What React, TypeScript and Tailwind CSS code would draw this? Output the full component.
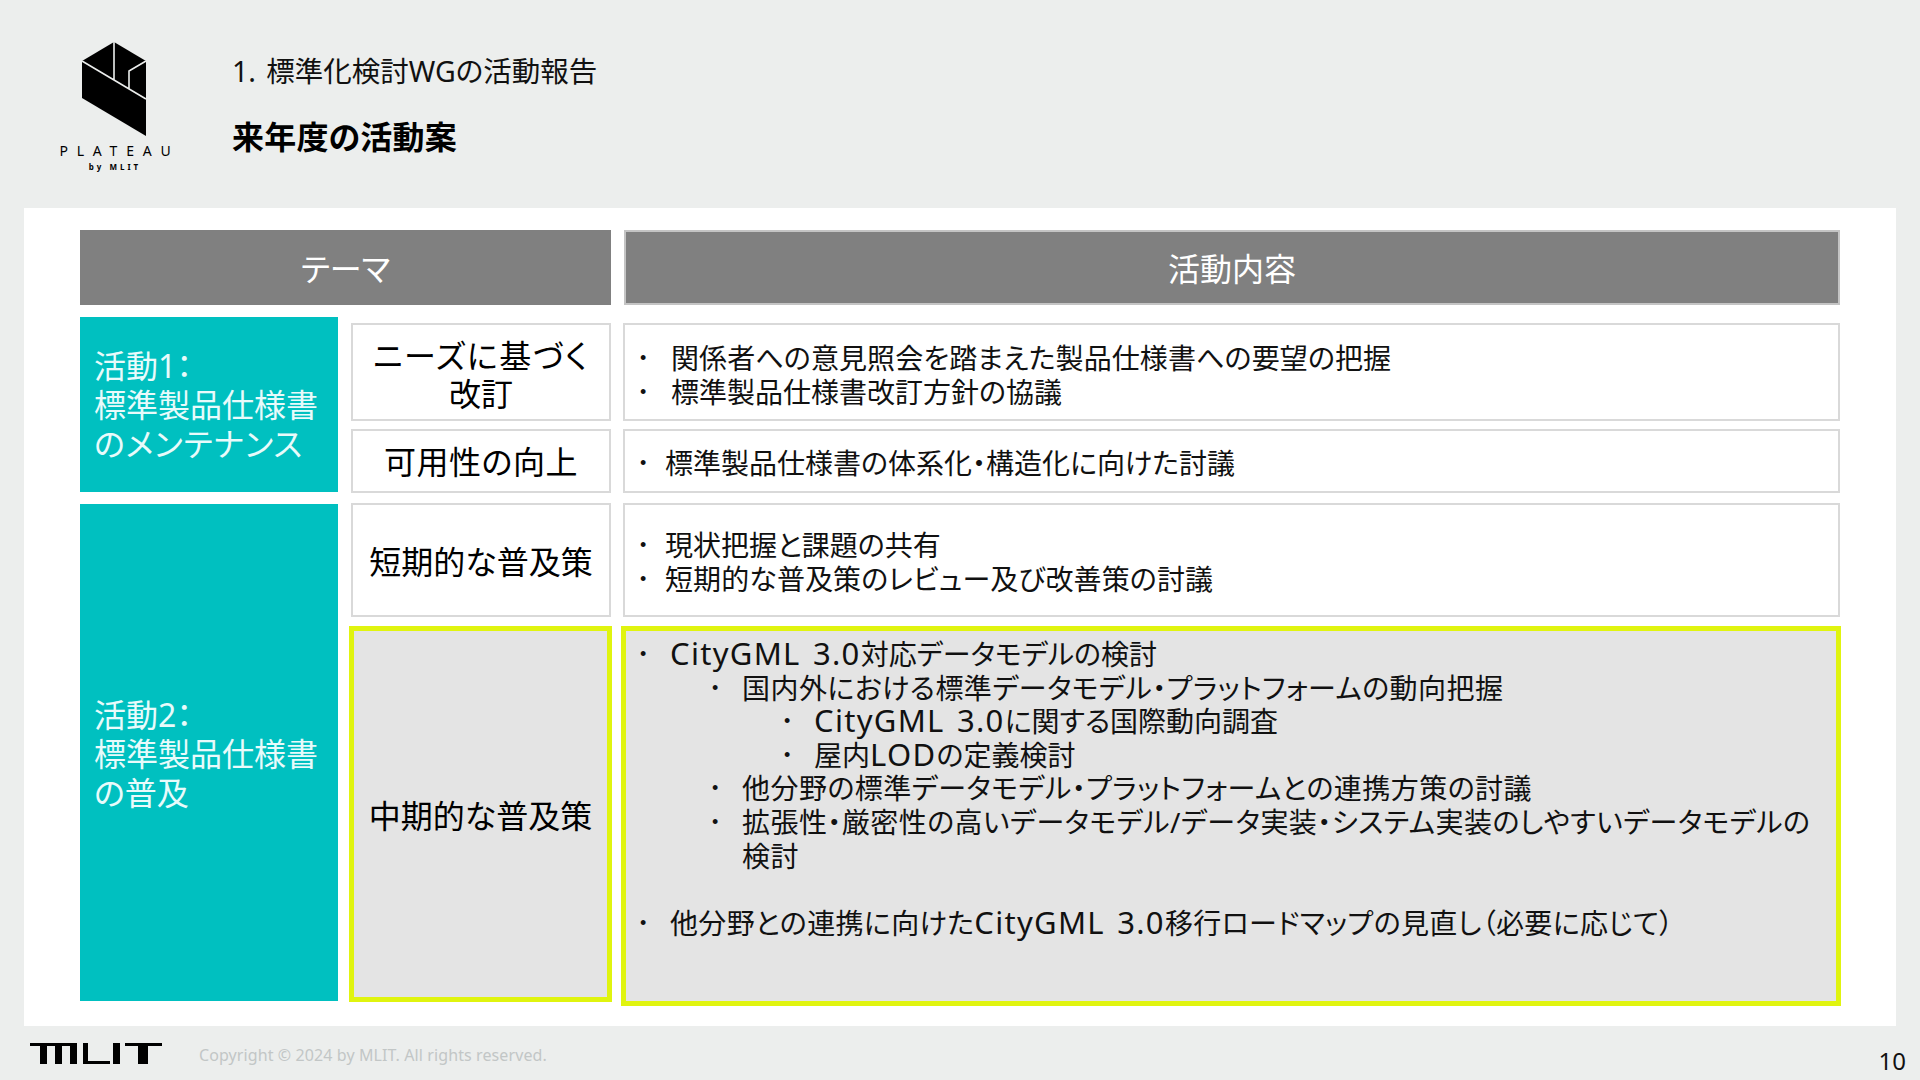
import type { ReactNode } from "react";

const font = "font-['Noto_Sans','Noto_Sans_CJK_JP',sans-serif]";

const Bullet = ({ level = 0, col = "w-[30px]", className = "", children }: { level?: number; col?: string; className?: string; children: ReactNode }) => {
    const indent = level === 0 ? "" : level === 1 ? "ml-[72px]" : "ml-[144px]";
    return (
        <div className={`flex ${indent}`}>
            <span className={`${col} shrink-0 font-['Liberation_Sans',sans-serif] text-[18px]`}>•</span>
            <span className={`whitespace-nowrap ${className}`}>{children}</span>
        </div>
    );
};

const Latin = ({ children }: { children: ReactNode }) => (
    <span className="text-[31px] leading-none tracking-[1.3px] [word-spacing:3px]">{children}</span>
);

const PlateauLogo = () => (
    <div className="flex w-[110px] flex-col items-center">
        <svg width="66" height="96" viewBox="0 0 66 96" className="ml-[-2px]">
            <path d="M33 0 L65 19 L65 94 L1 56 L1 19 Z" fill="#000" />
            <path d="M1 19 L65 57 M33 0 L33 38 M65 19 L48 29 L48 47" fill="none" stroke="#eceeed" strokeWidth="1.6" />
        </svg>
        <div className="mt-[5px] whitespace-nowrap pl-[9px] text-[14px] leading-[16px] tracking-[8.8px] text-black">PLATEAU</div>
        <div className="mt-[3px] text-[8px] font-bold leading-[10px] tracking-[3px] text-black">by MLIT</div>
    </div>
);

const MlitLogo = () => (
    <svg width="132" height="21" viewBox="0 0 132 21">
        <path d="M0 0 H47 V21 H40 V3 H32 V21 H25 V3 H17 V21 H10 V3 H0 Z" fill="#000" />
        <path d="M53 0 H58 V18 H80 V21 H53 Z" fill="#000" />
        <path d="M83 0 H90 V21 H83 Z" fill="#000" />
        <path d="M95 0 H132 V3 H118 V21 H108 V3 H95 Z" fill="#000" />
    </svg>
);

const ThemeCell = ({ className, children }: { className: string; children: ReactNode }) => (
    <div className={`flex items-center justify-center text-center text-[32px] leading-[38px] text-black ${className}`}>
        <div>{children}</div>
    </div>
);

export default function App() {
    return (
        <div className={`${font} flex h-[1080px] w-[1920px] flex-col overflow-hidden bg-[#eceeed] text-[#111] [font-feature-settings:'palt']`}>
            <header className="flex h-[208px] shrink-0 items-start pl-[60px] pt-[42px]">
                <PlateauLogo />
                <div className="ml-[62px] pt-[9px]">
                    <div className="text-[28.5px] leading-[40px] [word-spacing:3px]">1. 標準化検討WGの活動報告</div>
                    <div className="mt-[26px] text-[32px] font-bold leading-[40px] tracking-[0.2px] text-black">来年度の活動案</div>
                </div>
            </header>

            <main className="ml-[24px] h-[818px] w-[1872px] shrink-0 bg-white pl-[56px] pt-[22px]">
                <div className="flex h-[75px] text-[32px] text-white">
                    <div className="flex w-[531px] items-center justify-center bg-[#808080] pt-[2px]">テーマ</div>
                    <div className="ml-[13px] flex w-[1216px] items-center justify-center border-2 border-[#c4c4c4] bg-[#808080] pt-[2px]">活動内容</div>
                </div>

                <div className="mt-[12px] flex">
                    <div className="flex h-[175px] w-[258px] items-center bg-[#00c0c0] pl-[14px] text-[32px] leading-[39px] text-[#e8fbfb]">
                        <div>活動1：<br />標準製品仕様書<br /><span className="tracking-[0.8px]">のメンテナンス</span></div>
                    </div>
                    <div className="ml-[13px] flex flex-col gap-[8px] pt-[6px] text-[28px] leading-[33.6px]">
                        <div className="flex h-[98px] gap-[12px]">
                            <ThemeCell className="w-[260px] border-2 border-[#d9d9d9] pt-[5px]"><span className="tracking-[1.6px]">ニーズに基づく</span><br />改訂</ThemeCell>
                            <div className="flex w-[1217px] flex-col justify-center border-2 border-[#d9d9d9] pl-[15px] pt-[7px]">
                                <Bullet col="w-[31px]" className="tracking-[0.1px]">関係者への意見照会を踏まえた製品仕様書への要望の把握</Bullet>
                                <Bullet col="w-[31px]">標準製品仕様書改訂方針の協議</Bullet>
                            </div>
                        </div>
                        <div className="flex h-[64px] gap-[12px]">
                            <ThemeCell className="w-[260px] border-2 border-[#d9d9d9] pt-[2px]"><span className="tracking-[0.5px]">可用性の向上</span></ThemeCell>
                            <div className="flex w-[1217px] flex-col justify-center border-2 border-[#d9d9d9] pl-[15px] pt-[5px]">
                                <Bullet col="w-[25px]">標準製品仕様書の体系化・構造化に向けた討議</Bullet>
                            </div>
                        </div>
                    </div>
                </div>

                <div className="mt-[11px] flex">
                    <div className="flex h-[497px] w-[258px] items-center bg-[#00c0c0] pl-[14px] text-[32px] leading-[39px] text-[#e8fbfb]">
                        <div className="mt-[2px]">活動2：<br />標準製品仕様書<br />の普及</div>
                    </div>
                    <div className="ml-[11px] mt-[-1px] flex flex-col text-[28px] leading-[33.6px]">
                        <div className="ml-[2px] flex h-[114px] gap-[12px]">
                            <ThemeCell className="w-[260px] border-2 border-[#d9d9d9] pt-[4px]">短期的な普及策</ThemeCell>
                            <div className="flex w-[1217px] flex-col justify-center border-2 border-[#d9d9d9] pl-[15px] pt-[5px]">
                                <Bullet col="w-[25px]">現状把握と課題の共有</Bullet>
                                <Bullet col="w-[25px]" className="tracking-[0.1px]">短期的な普及策のレビュー及び改善策の討議</Bullet>
                            </div>
                        </div>
                        <div className="mt-[9px] flex gap-[9px]">
                            <ThemeCell className="h-[376px] w-[263px] border-[5px] border-[#e0f40f] bg-[#e4e4e4] pt-[3px]">中期的な普及策</ThemeCell>
                            <div className="h-[380px] w-[1220px] border-[5px] border-[#e0f40f] bg-[#e4e4e4] pl-[14px] pt-[7px]">
                                <Bullet><Latin>CityGML 3.0</Latin>対応データモデルの検討</Bullet>
                                <Bullet level={1} className="tracking-[0.45px]">国内外における標準データモデル・プラットフォームの動向把握</Bullet>
                                <Bullet level={2}><Latin>CityGML 3.0</Latin>に関する国際動向調査</Bullet>
                                <Bullet level={2}>屋内<Latin>LOD</Latin>の定義検討</Bullet>
                                <Bullet level={1} className="tracking-[0.45px]">他分野の標準データモデル・プラットフォームとの連携方策の討議</Bullet>
                                <Bullet level={1} className="tracking-[0.45px]">拡張性・厳密性の高いデータモデル/データ実装・システム実装のしやすいデータモデルの<br />検討</Bullet>
                                <div className="h-[33.6px]" />
                                <Bullet className="tracking-[0.35px]">他分野との連携に向けた<Latin>CityGML 3.0</Latin>移行ロードマップの見直し（必要に応じて）</Bullet>
                            </div>
                        </div>
                    </div>
                </div>
            </main>

            <footer className="flex h-[54px] shrink-0 items-center pl-[30px]">
                <MlitLogo />
                <div className="ml-[37px] mt-[3px] text-[16px] tracking-[0.1px] text-[#c2c6c6]">Copyright © 2024 by MLIT. All rights reserved.</div>
                <div className="ml-auto mr-[14px] mt-[15px] text-[24px] text-[#111]">10</div>
            </footer>
        </div>
    );
}
